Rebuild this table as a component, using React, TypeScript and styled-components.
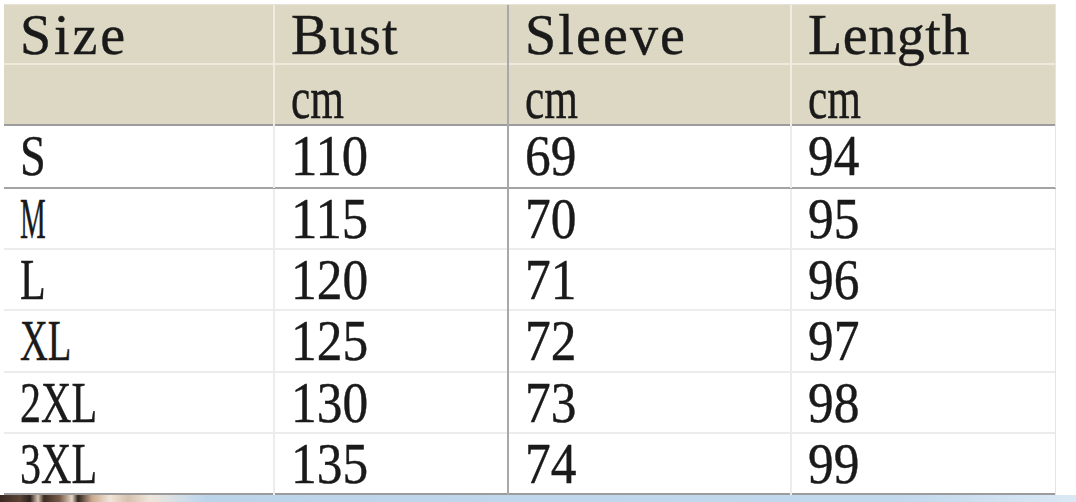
import React from "react";
import styled, { createGlobalStyle } from "styled-components";

const Global = createGlobalStyle`
  html, body { margin: 0; padding: 0; background: #ffffff; }
  body { width: 1076px; height: 502px; overflow: hidden; }
`;

const COLS = "271px 234px 283px 264px";
const FONT = '"Liberation Serif", "Times New Roman", serif';

const Page = styled.div`
  display: flex;
  flex-direction: column;
  width: 1076px;
  height: 502px;
  padding-top: 4px;
  box-sizing: border-box;
`;

const Table = styled.div`
  display: flex;
  flex-direction: column;
  width: 1052px;
  margin-left: 4px;
  border-top: 1px solid #e6e3d6;
`;

const Row = styled.div<{ $header?: boolean; $h: number; $line: "light" | "dark" | "head" | "none" }>`
  display: grid;
  grid-template-columns: ${COLS};
  height: ${(p) => p.$h}px;
  box-sizing: border-box;
  background: ${(p) => (p.$header ? "#dcd8c3" : "#ffffff")};
  border-bottom: ${(p) =>
    p.$line === "dark"
      ? "2px solid #a3a3a3"
      : p.$line === "head"
      ? "2px solid #eeebdd"
      : p.$line === "light"
      ? "2px solid #ececec"
      : "2px solid #9c9c9c"};
`;

const Cell = styled.div<{ $header?: boolean; $divider?: boolean; $last?: boolean }>`
  display: flex;
  align-items: center;
  padding-left: 16px;
  box-sizing: border-box;
  overflow: visible;
  color: #1e1e1e;
  font-family: ${FONT};
  border-right: ${(p) =>
    p.$last
      ? "1px solid #e4e4e4"
      : p.$divider
      ? "2px solid #a8a8a8"
      : p.$header
      ? "2px solid #efece0"
      : "2px solid #ececec"};
`;

const Glyphs = styled.span<{ $size: number }>`
  display: inline-block;
  white-space: nowrap;
  transform-origin: left center;
  font-family: ${FONT};
  font-size: ${(p) => p.$size}px;
  line-height: 1.1;
  color: #1a1a1a;
  -webkit-text-stroke: 0.4px #1a1a1a;
`;

const Strip = styled.div`
  display: flex;
  height: 8px;
  width: 1076px;
`;

const Photo = styled.div`
  width: 205px;
  height: 100%;
  background: linear-gradient(
    90deg,
    #3a2a22 0px,
    #5c4436 20px,
    #2b211c 30px,
    #d8c6b2 38px,
    #3b2b22 44px,
    #7a5d4a 60px,
    #e7d7c6 72px,
    #2f241e 78px,
    #caa98d 92px,
    #f1e6da 110px,
    #d6c1ad 128px,
    #efe6dc 150px,
    #c9dbea 190px,
    #bcd4ea 205px
  );
`;

const Sky = styled.div`
  flex: 1;
  height: 100%;
  background: linear-gradient(90deg, #bcd4ea 0%, #c2d8ed 80%, #dbe8f4 100%);
`;

let ctx: CanvasRenderingContext2D | null = null;
function fit(text: string, size: number, advance: number) {
  if (!ctx && typeof document !== "undefined") {
    ctx = document.createElement("canvas").getContext("2d");
  }
  if (!ctx) return { scale: 1, spacing: 0 };
  ctx.font = `${size}px "Liberation Serif"`;
  const w = ctx.measureText(text).width;
  const target = text.length * advance;
  if (target >= w) return { scale: 1, spacing: (target - w) / text.length };
  return { scale: target / w, spacing: 0 };
}

const Mono: React.FC<{ text: string; size?: number; advance?: number }> = ({
  text,
  size = 56,
  advance = 25.7,
}) => {
  const { scale, spacing } = fit(text, size, advance);
  return (
    <Glyphs $size={size} style={{ transform: `scaleX(${scale})`, letterSpacing: `${spacing}px` }}>
      {text}
    </Glyphs>
  );
};

const headers = ["Size", "Bust", "Sleeve", "Length"];
const units = ["", "cm", "cm", "cm"];
const rows: { cells: string[]; h: number }[] = [
  { cells: ["S", "110", "69", "94"], h: 63 },
  { cells: ["M", "115", "70", "95"], h: 61 },
  { cells: ["L", "120", "71", "96"], h: 61 },
  { cells: ["XL", "125", "72", "97"], h: 62 },
  { cells: ["2XL", "130", "73", "98"], h: 61 },
  { cells: ["3XL", "135", "74", "99"], h: 61 },
];

export default function App() {
  return (
    <>
      <Global />
      <Page>
        <Table>
          <Row $header $h={60} $line="head">
            {headers.map((t, i) => (
              <Cell key={t} $header $divider={i === 1} $last={i === 3}>
                <Mono text={t} advance={27} />
              </Cell>
            ))}
          </Row>
          <Row $header $h={61} $line="none">
            {units.map((t, i) => (
              <Cell key={i} $header $divider={i === 1} $last={i === 3}>
                {t && <Mono text={t} size={60} advance={26.5} />}
              </Cell>
            ))}
          </Row>
          {rows.map((r, ri) => (
            <Row
              key={r.cells[0]}
              $h={r.h}
              $line={ri === 0 ? "dark" : ri === rows.length - 1 ? "none" : "light"}
            >
              {r.cells.map((c, i) => (
                <Cell key={i} $divider={i === 1} $last={i === 3}>
                  <Mono text={c} />
                </Cell>
              ))}
            </Row>
          ))}
        </Table>
        <Strip>
          <Photo />
          <Sky />
        </Strip>
      </Page>
    </>
  );
}
